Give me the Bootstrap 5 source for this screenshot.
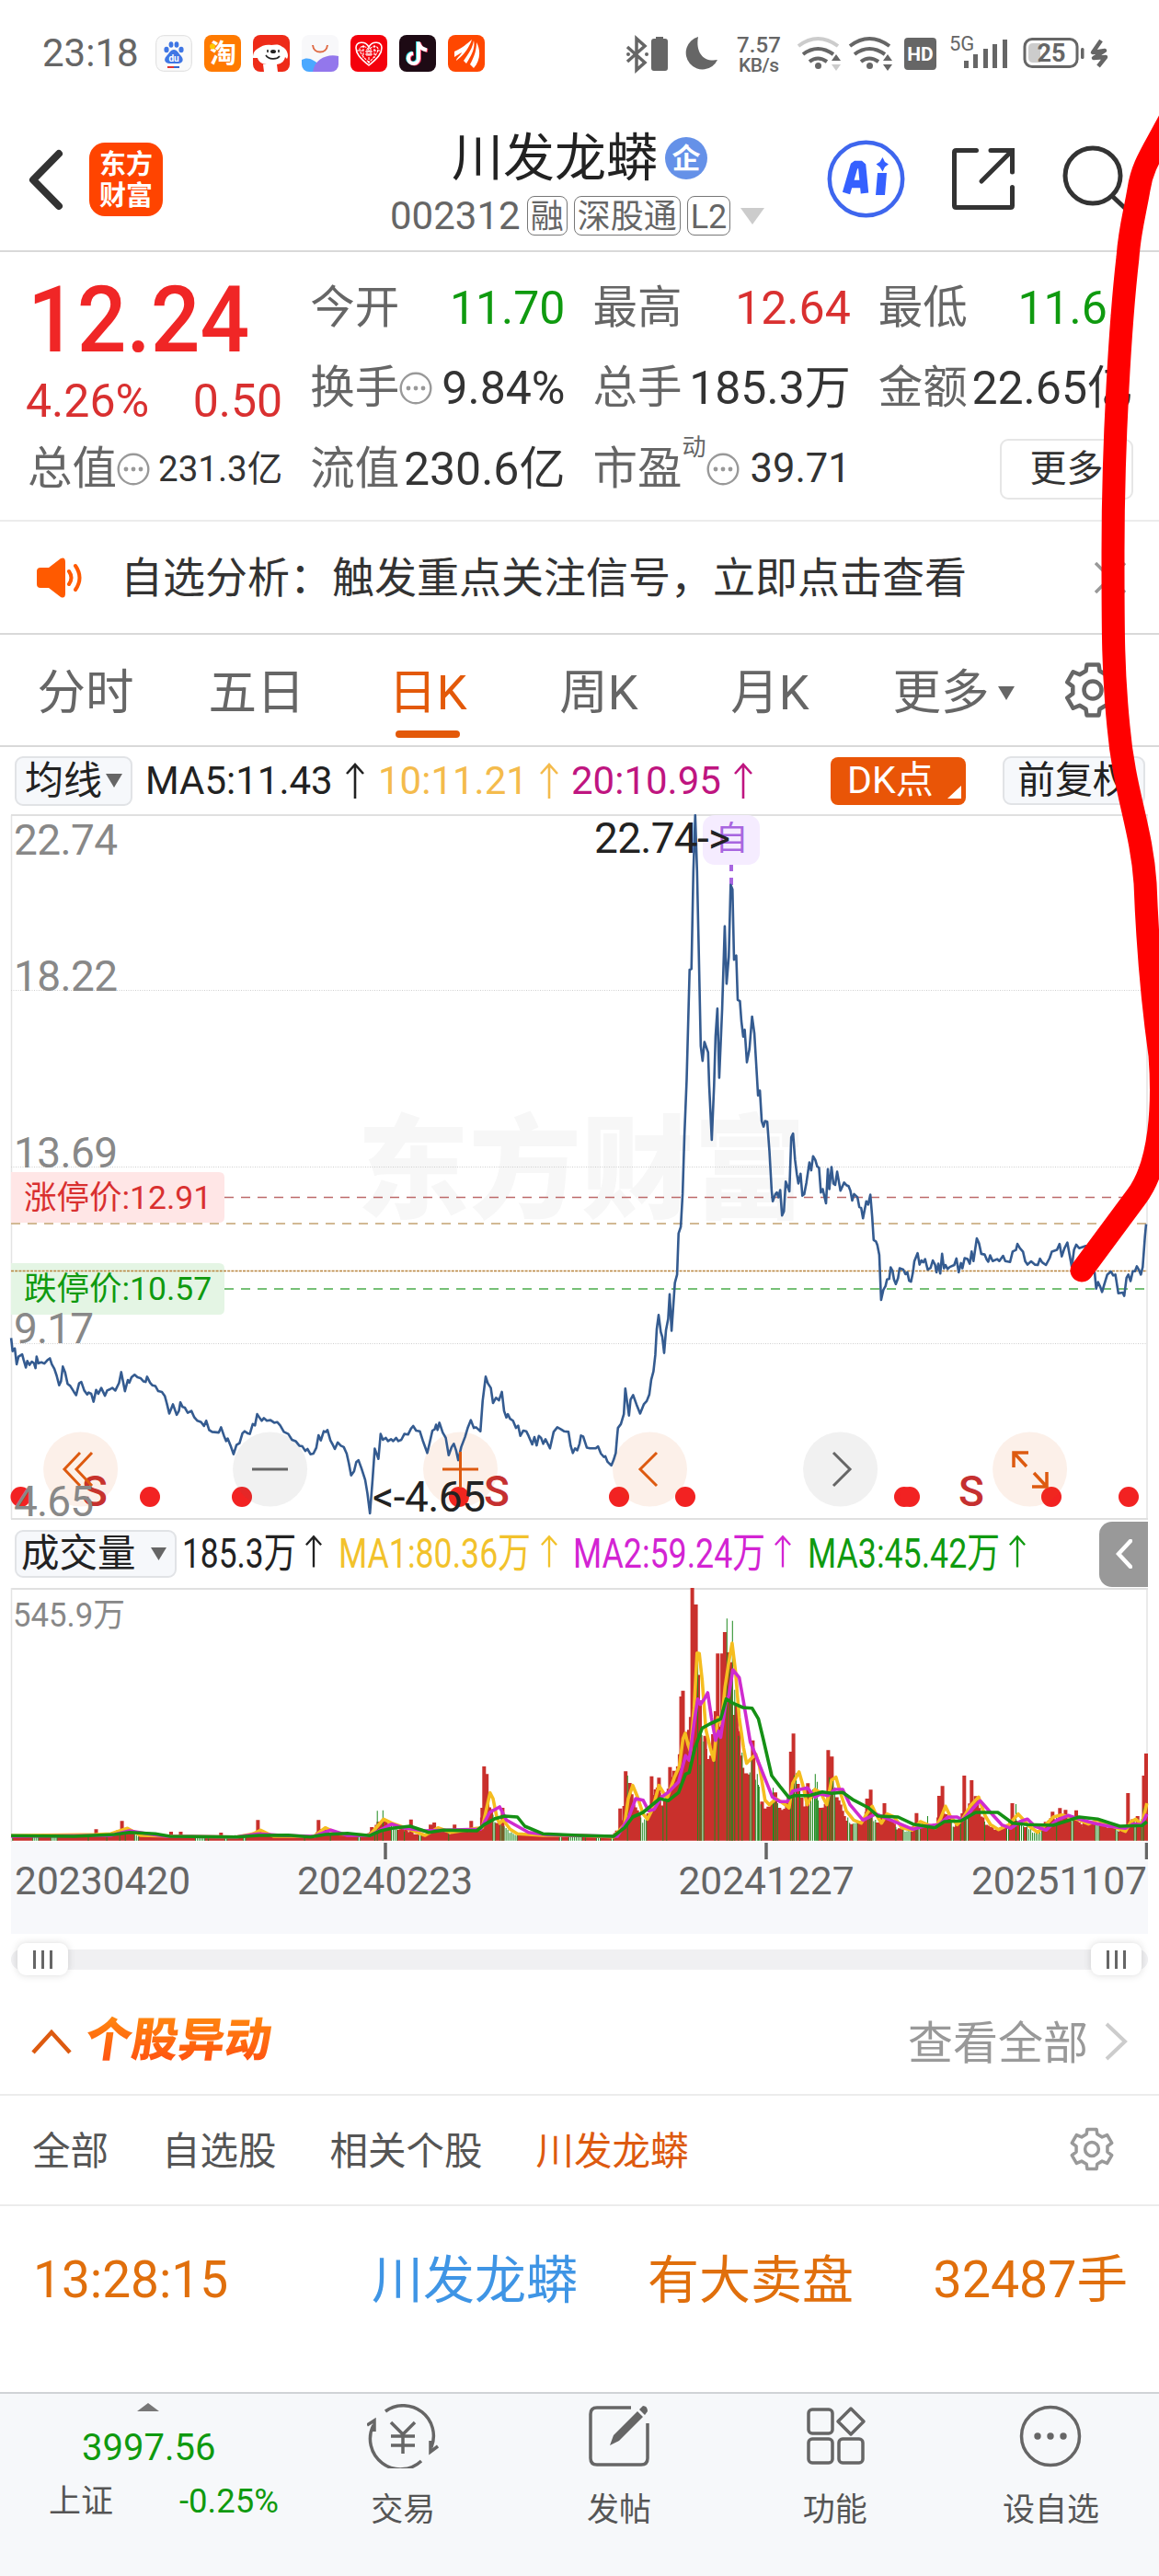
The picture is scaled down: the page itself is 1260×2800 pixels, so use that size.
<!DOCTYPE html>
<html lang="zh-CN">
<head>
  <meta charset="UTF-8">
  <title>川发龙蟒 002312</title>
  <meta name="viewport" content="width=device-width, initial-scale=1">
  <link href="https://cdn.jsdelivr.net/npm/bootstrap@5.3.3/dist/css/bootstrap.min.css" rel="stylesheet">
  <style>
    body { font-family: Roboto, "Noto Sans CJK SC", sans-serif; color: #333; line-height: 1; background: #fff; overflow-x: hidden; }
    svg { display: block; flex-shrink: 0; }
    svg text { font-family: Roboto, "Noto Sans CJK SC", sans-serif; }
    .page { width: 1260px; height: 2800px; overflow: hidden; }
    .gray6 { color: #666; }
    .gray9 { color: #999; }
    .up { color: #d93030; }
    .down { color: #0f9a0f; }
    .hot { color: #dd5a10; }

    /* status bar */
    .status-row { height: 116px; padding: 0 50px 0 46px; }
    .clock { font-size: 42px; width: 123px; }
    .app-ico { width: 40px; height: 40px; margin-right: 13px; border-radius: 8px; overflow: hidden; }

    /* title bar */
    .title-row { height: 158px; border-bottom: 2px solid #d9d9d9; }
    .brand { width: 80px; height: 80px; margin-top: 39px; border-radius: 17px; background: #ff4400; color: #fff; font-size: 29px; font-weight: 700; line-height: 34px; text-align: center; padding-top: 7px; }
    .stock { width: 410px; margin-left: 247px; padding-top: 28px; }
    .stock-name { font-size: 56px; color: #222; }
    .qi { width: 46px; height: 46px; border-radius: 50%; background: #6591e8; color: #fff; font-size: 31px; font-weight: 700; }
    .stock-code { font-size: 42px; color: #666; }
    .tagbox { height: 43px; border: 1.5px solid #777; border-radius: 8px; font-size: 36px; color: #666; padding: 2px 3px 0; }

    /* quote */
    .quote { height: 293px; padding: 17px 28px 0 30px; display: grid; grid-template-columns: repeat(4, 1fr); column-gap: 30px; border-bottom: 2px solid #ececec; }
    .qrow { height: 87.5px; display: flex; align-items: center; justify-content: space-between; font-size: 50px; white-space: nowrap; }
    .qrow .lb { font-size: 48.5px; color: #666; }
    .price { height: 114px; font-size: 100px; font-weight: 500; color: #f02626; transform: scaleX(.945); transform-origin: 0 50%; }
    .more-btn { width: 145px; height: 66px; border: 2px solid #e6e6e6; border-radius: 9px; font-size: 40px; }
    .notice { height: 123px; border-bottom: 2px solid #d9d9d9; font-size: 46px; padding: 0 36px 0 39px; }

    /* chart */
    .ktabs { height: 122px; border-bottom: 2px solid #d9d9d9; font-size: 52.5px; color: #666; }
    .ktabs .ktab { width: 186px; height: 100%; position: relative; padding-top: 6px; }
    .ktabs .on { color: #e35909; }
    .ktabs .on::after { content: ""; position: absolute; left: 58px; bottom: 8px; width: 70px; height: 8px; border-radius: 4px; background: #e35909; }
    .ma-row { height: 73px; font-size: 42px; padding-left: 16px; padding-right: 15px; }
    .sel { background: #f6f8fb; border: 2px solid #e1e3e6; border-radius: 9px; color: #222; }
    .dk { width: 147px; height: 52px; border-radius: 8px; background: #e95507; color: #fff; font-size: 41px; }
    .vol-row { height: 74px; padding-left: 16px; padding-right: 12px; }
    .fold { width: 53px; height: 71px; background: #999; border-radius: 14px 0 0 14px; }
    .dates { margin: 0 12px; height: 100px; background: #f7f8fb; }
    .range { height: 59px; padding: 0 12px 4px; }
    .track { height: 22px; border-radius: 11px; background: #f0f0f2; padding: 0 7px; }
    .knob { width: 55px; height: 35px; border-radius: 9px; background: #fff; box-shadow: 0 0 8px rgba(0,0,0,.15); gap: 6px; }
    .knob i { width: 3px; height: 20px; background: #666; }

    /* moves list */
    .mv-head { height: 117px; border-bottom: 2px solid #ececec; padding: 0 34px 0 34px; }
    .mv-title { font-size: 50.5px; font-weight: 900; color: transparent; background: linear-gradient(#ff8a10, #ff4a10); -webkit-background-clip: text; background-clip: text; transform: skewX(-8deg); padding: 4px 0; }
    .mv-tabs { height: 120px; border-bottom: 2px solid #ececec; padding: 3px 48px 0 35px; font-size: 41.5px; color: #555; gap: 58px; }
    .mv-row { height: 202px; padding: 53px 34px 0 36px; color: #e06f0c; font-size: 56px; }

    /* bottom bar */
    .tabbar { height: 200px; background: #f6f8fa; border-top: 2px solid #d0d3d6; font-size: 35px; color: #555; }
    .tabbar .idx { width: 321px; }
    .tabbar .tb { width: 234.7px; padding-top: 11px; }
    .tabbar .tb svg { margin-bottom: 28px; }
  </style>
</head>
<body>
<svg width="0" height="0" class="position-absolute">
  <symbol id="gear" viewBox="-32 -32 64 64">
    <path d="M-7.5-20.7-6.5-27.5H6.5L7.5-20.7 14.2-16.8 21.3-19.8 27.8-8.5 21.7-3.9V3.9L27.8 8.5 21.3 19.8 14.2 16.8 7.5 20.7 6.5 27.5H-6.5L-7.5 20.7-14.2 16.8-21.3 19.8-27.8 8.5-21.7 3.9V-3.9L-27.8-8.5-21.3-19.8-14.2-16.8Z" fill="none" stroke="currentColor" stroke-width="4.5" stroke-linejoin="round"/>
    <circle r="9.5" fill="none" stroke="currentColor" stroke-width="4.5"/>
  </symbol>
  <symbol id="info" viewBox="0 0 36 36">
    <circle cx="18" cy="18" r="16.3" fill="none" stroke="#999" stroke-width="2.4"/>
    <g fill="#999"><circle cx="10" cy="18" r="2.4"/><circle cx="18" cy="18" r="2.4"/><circle cx="26" cy="18" r="2.4"/></g>
  </symbol>
  <symbol id="arrow" viewBox="0 0 20 40">
    <path d="M10 39V2M1 12 10 2l9 10" fill="none" stroke="currentColor" stroke-width="2.6"/>
  </symbol>
</svg>

<div class="page position-relative">

  <!-- status bar -->
  <div class="status-row d-flex align-items-center">
    <div class="clock gray6">23:18</div>
    <svg class="app-ico" viewBox="0 0 40 40"><rect x=".7" y=".7" width="38.6" height="38.6" rx="8" fill="#fafafa" stroke="#ddd"/><g fill="#3f76e4"><ellipse cx="12" cy="16" rx="2.6" ry="3.3"/><ellipse cx="17" cy="10.5" rx="2.4" ry="3.2"/><ellipse cx="23" cy="10.5" rx="2.4" ry="3.2"/><ellipse cx="28" cy="16" rx="2.6" ry="3.3"/><path d="M20 16c4 0 5 4 8 7 4 5 0 8-3 8H15c-4 0-7-4-3-8 3-3 4-7 8-7z"/></g><text x="20" y="29" font-size="10" font-weight="700" fill="#fff" text-anchor="middle">du</text><path d="M13 35h7" stroke="#d33" stroke-width="2"/><path d="M20 35h6" stroke="#36c" stroke-width="2"/></svg>
    <svg class="app-ico" viewBox="0 0 40 40"><rect width="40" height="40" fill="#ff7a00"/><text x="20.500" y="30.500" font-size="29" font-weight="700" fill="#fff" text-anchor="middle">淘</text><circle cx="9" cy="12.500" r="3" fill="#ffc800"/></svg>
    <svg class="app-ico" viewBox="0 0 40 40"><rect width="40" height="40" fill="#ee2b18"/><path d="M5 15C2 17 0 19 0 25h5c1 4 5 7 10 7h-4l1 8h15l-1-8c6-1 8-4 9-8l2 2c3-4-1-12-5-13-5-4-9-2-12-2-5-1-10 0-15 4z" fill="#fff"/><path d="M16 16v3M28 16v3M14 22c3 5 12 5 15 1" stroke="#222" stroke-width="1.600" fill="none"/><ellipse cx="22" cy="18" rx="3" ry="2" fill="#222"/></svg>
    <svg class="app-ico" viewBox="0 0 40 40"><rect width="40" height="40" fill="#f8f8fa"/><path d="M0 27c7-4 13 0 20 6v7H0z" fill="#4aa8ff"/><path d="M12 40c2-14 16-20 28-17v17z" fill="#9377ec"/><path d="M12 11c1 10 15 10 16 0" fill="none" stroke="#df6b45" stroke-width="2"/></svg>
    <svg class="app-ico" viewBox="0 0 40 40"><rect width="40" height="40" fill="#f4000c"/><path d="M20 33C10 25 6 20 6 14c0-7 10-8 14-1 4-7 14-6 14 1 0 6-4 11-14 19z" fill="none" stroke="#fff" stroke-width="1.600"/><path d="M20 30C13 23 10 19 10 15c1-4 7-3 10 1 3-4 9-5 10-1 0 4-3 8-10 15zM20 12v20M14 11v14M26 11v14M7 17h8M25 17h8" fill="none" stroke="#fff" stroke-width="1.100" stroke-dasharray="3 1"/><path d="M18 15v8M22 15v8M16 18h8M16 21h8" stroke="#fff" stroke-width="1"/></svg>
    <svg class="app-ico" viewBox="0 0 40 40"><rect width="40" height="40" fill="#1d0a14"/><g fill="none" stroke-width="4"><path d="M21 7v18a5.500 5.500 0 1 1-6-5.500M21 8c1 5 4 7 9 8" stroke="#27d8dc" transform="translate(-1 0)"/><path d="M21 8v18a5.500 5.500 0 1 1-6-5.500M21 9c1 5 4 7 9 8" stroke="#f2335d" transform="translate(1 0)"/><path d="M21 7.500v18a5.500 5.500 0 1 1-6-5.500M21 8.500c1 5 4 7 9 8" stroke="#fff"/></g></svg>
    <svg class="app-ico" viewBox="0 0 40 40"><rect width="40" height="40" fill="#ff4700"/><path d="M7 18C16 14 20 10 26 5c-3 9-9 17-17 23 0-3 5-6 6-9-2 1-5 3-8 5zM17 28C22 21 27 14 28 6c2 9-3 17-8 25zM24 32C29 23 31 16 31 8c5 9 4 20-3 28z" fill="#fff"/></svg>

    <svg class="ms-auto" width="530" height="44" viewBox="680 36 530 44" fill="#666">
      <path d="m682 51 19 17-9 8V42l9 8-19 17" fill="none" stroke="#666" stroke-width="3.500"/><circle cx="683" cy="59" r="2"/><circle cx="703" cy="59" r="2"/>
      <path d="M708 45q0-3 3-3h2v-2h8v2h2q3 0 3 3v29q0 3-3 3h-12q-3 0-3-3z"/>
      <path d="M759 40a18 18 0 1 0 21 25c-16 3-24-9-21-25z"/>
      <text x="825" y="57" font-size="24" font-weight="500" text-anchor="middle" textLength="48">7.57</text>
      <text x="825" y="78" font-size="21" font-weight="500" text-anchor="middle" textLength="44">KB/s</text>
      <g fill="none" stroke="#666" stroke-width="4">
        <path d="M868 50q21-16 43 0" stroke="#ccc"/><path d="M873 59q16-12 33 0M880 67q9-7 19 0"/><circle cx="889.500" cy="71.500" r="3.500" fill="#666" stroke="none"/>
        <path d="m909 59 5 7h-10z" fill="#666" stroke="none"/><path d="m909 77 5-7h-10z" fill="#ccc" stroke="none"/>
      </g>
      <g fill="none" stroke="#666" stroke-width="4" transform="translate(56 0)">
        <path d="M868 50q21-16 43 0M873 59q16-12 33 0M880 67q9-7 19 0"/><circle cx="889.500" cy="71.500" r="3.500" fill="#666" stroke="none"/>
        <path d="m909 59 5 7h-10zm0 18 5-7h-10z" fill="#666" stroke="none"/>
      </g>
      <rect x="983" y="41" width="35" height="35" rx="4"/><text x="1000.500" y="66" font-size="21" font-weight="700" fill="#fff" text-anchor="middle">HD</text>
      <text x="1032" y="55" font-size="22">5G</text>
      <path d="M1048 66h5v8h-5zM1058 59h5v15h-5zM1069 53h5v21h-5zM1079 48h5v26h-5zM1090 43h5v31h-5z"/>
      <rect x="1114" y="42.500" width="57" height="30" rx="8" fill="none" stroke="#666" stroke-width="3"/><path d="M1118 52q0-5 5-5h8v21h-8q-5 0-5-5z" fill="#ccc"/>
      <text x="1143" y="67" font-size="27" font-weight="700" text-anchor="middle">25</text><rect x="1175" y="52" width="3.500" height="12" rx="1.500"/>
      <path d="m1197 44-9 13 13-2-12 8 13-1-8 10" fill="none" stroke="#666" stroke-width="4.500" stroke-linejoin="round"/>
    </svg>
  </div>

  <!-- title bar -->
  <div class="title-row d-flex">
    <svg class="ms-4" width="73" height="156" viewBox="24 116 73 156"><path d="M64 167 36 195.500 64 224" fill="none" stroke="#333" stroke-width="8" stroke-linecap="round" stroke-linejoin="round"/></svg>
    <div class="brand">东方<br>财富</div>
    <div class="stock">
      <div class="d-flex align-items-center" style="padding-left:67px">
        <span class="stock-name">川发龙蟒</span><span class="qi d-flex align-items-center justify-content-center ms-2">企</span>
      </div>
      <div class="d-flex align-items-center" style="margin-top:13px;gap:7px">
        <span class="stock-code">002312</span>
        <span class="tagbox d-flex align-items-center">融</span>
        <span class="tagbox d-flex align-items-center">深股通</span>
        <span class="tagbox d-flex align-items-center">L2</span>
        <svg class="ms-1" width="26" height="18"><path d="M0 0h26L13 18z" fill="#ccc"/></svg>
      </div>
    </div>
    <svg class="ms-auto" width="370" height="156" viewBox="890 116 370 156">
      <circle cx="941.500" cy="194.500" r="39.700" fill="none" stroke="#3e66ee" stroke-width="4.500"/>
      <path d="m920 210 9-31h8l3 31M923 200h16" fill="none" stroke="#3560ff" stroke-width="8.500" stroke-linejoin="bevel"/>
      <path d="m954 188h10l-2 24h-10zM959.500 171l2.500 5 4 2.500-4 3-2.500 5-3-5-4-3 4-2.500z" fill="#3560ff"/>
      <path d="M1061.500 163.500h-22q-2 0-2 2v58q0 2 2 2h59q2 0 2-2v-20M1077 163.500h23.500V187M1099 165l-32 32" fill="none" stroke="#333" stroke-width="5" stroke-linecap="round"/>
      <circle cx="1188" cy="191" r="30" fill="none" stroke="#333" stroke-width="5"/><path d="m1209 213 18 17" stroke="#333" stroke-width="5"/>
    </svg>
  </div>

  <!-- quote -->
  <div class="quote">
    <div>
      <div class="price d-flex align-items-center">12.24</div>
      <div class="qrow up" style="height:61px"><span style="margin-left:-2px">4.26%</span><span>0.50</span></div>
      <div class="qrow"><span class="d-flex align-items-center lb">总值<svg width="36" height="36"><use href="#info"/></svg></span><span style="font-size:38.500px">231.3亿</span></div>
    </div>
    <div>
      <div class="qrow"><span class="lb">今开</span><span class="down">11.70</span></div>
      <div class="qrow"><span class="d-flex align-items-center lb">换手<svg width="36" height="36"><use href="#info"/></svg></span><span>9.84%</span></div>
      <div class="qrow"><span class="lb">流值</span><span>230.6亿</span></div>
    </div>
    <div>
      <div class="qrow"><span class="lb">最高</span><span class="up">12.64</span></div>
      <div class="qrow"><span class="lb">总手</span><span>185.3万</span></div>
      <div class="qrow justify-content-start"><span class="lb">市盈</span><span class="gray6 align-self-start" style="font-size:26px;margin-top:7px">动</span><svg width="36" height="36"><use href="#info"/></svg><span style="font-size:43.500px;margin-left:12px">39.71</span></div>
    </div>
    <div>
      <div class="qrow"><span class="lb">最低</span><span class="down">11.65</span></div>
      <div class="qrow"><span class="lb">金额</span><span>22.65亿</span></div>
      <div class="qrow justify-content-end"><span class="more-btn d-flex align-items-center justify-content-center">更多</span></div>
    </div>
  </div>

  <div class="notice d-flex align-items-center">
    <svg width="52" height="44" viewBox="0 0 52 44"><path d="M1 15q0-4 4-4h9L27 1q5-2 5 4v34q0 6-5 4L14 33H5q-4 0-4-4z" fill="#ff5a00"/><path d="M36 15q5 7 0 14M43 9q9 13 0 26" fill="none" stroke="#ff5a00" stroke-width="4" stroke-linecap="round"/></svg>
    <span style="margin-left:40px">自选分析：触发重点关注信号，立即点击查看</span>
    <svg class="ms-auto" width="34" height="34"><path d="M1 1l32 32M33 1 1 33" stroke="#999" stroke-width="3.500"/></svg>
  </div>

  <!-- period tabs -->
  <div class="ktabs d-flex align-items-center">
    <div class="ktab d-flex align-items-center justify-content-center">分时</div>
    <div class="ktab d-flex align-items-center justify-content-center">五日</div>
    <div class="ktab on d-flex align-items-center justify-content-center">日K</div>
    <div class="ktab d-flex align-items-center justify-content-center">周K</div>
    <div class="ktab d-flex align-items-center justify-content-center">月K</div>
    <div class="ktab d-flex align-items-center justify-content-center" style="padding-left:27px">更多<svg width="18" height="15" style="margin-left:9px"><path d="M0 0h18L9 15z" fill="#666"/></svg></div>
    <svg width="64" height="64" style="margin-left:40px"><use href="#gear"/></svg>
  </div>

  <div class="ma-row d-flex align-items-center">
    <span class="sel d-flex align-items-center" style="width:128px;height:54px;padding-left:9px">均线<svg width="18" height="15" style="margin-left:4px"><path d="M0 0h18L9 15z" fill="#666"/></svg></span>
    <span style="color:#222;margin-left:14px;width:218px">MA5:11.43</span><svg style="color:#222" width="20" height="40"><use href="#arrow"/></svg>
    <span style="color:#f4bb4c;margin-left:15px;width:176px">10:11.21</span><svg style="color:#f4bb4c" width="20" height="40"><use href="#arrow"/></svg>
    <span style="color:#bf1580;margin-left:14px;width:177px">20:10.95</span><svg style="color:#bf1580" width="20" height="40"><use href="#arrow"/></svg>
    <span class="dk d-flex align-items-center ms-auto" style="padding-left:18px">DK点<svg width="15" height="14" style="margin:24px 0 0 15px"><path d="M15 0v14H0z" fill="#fff"/></svg></span>
    <span class="sel d-flex align-items-center justify-content-center" style="width:155px;height:53px;margin-left:40px;font-size:41px">前复权</span>
  </div>

  <!-- price chart -->
  <svg width="1260" height="767" viewBox="0 885 1260 767">
    <text x="388" y="1314" font-size="122" font-weight="900" fill="#f7f7f7">东方财富</text>
    <path d="M12.500 886V1651M1247 886V1651" stroke="#e4e4e4" stroke-width="1.500"/>
    <path d="M12 886H1248M12 1651H1248" stroke="#e0e0e0" stroke-width="2"/>
    <path d="M12 1076.500H1247M12 1262.500H1247M12 1460.500H1247" stroke="none"/>
    <path d="M12 1076.500H1247M12 1268.500H1247M12 1460.500H1247" stroke="#cfcfcf" stroke-width="1" stroke-dasharray="1 1.500"/>
    <path d="M12 1274H238q6 0 6 6v43q0 6-6 6H12z" fill="#ffe6e6"/>
    <path d="M12 1373H238q6 0 6 6v44q0 6-6 6H12z" fill="#e4f5e4"/>
    <path d="M244 1301.500H1247" stroke="#bd6a6a" stroke-width="1.600" stroke-dasharray="10 8"/>
    <path d="M12 1330H1247" stroke="#d2b994" stroke-width="1.800" stroke-dasharray="10 8"/>
    <path d="M12 1381.500H1247" stroke="#b8843e" stroke-width="1.500" stroke-dasharray="3 1.200"/>
    <path d="M244 1401H1247" stroke="#76c076" stroke-width="2" stroke-dasharray="10 8"/>
    <text x="26" y="1314" font-size="35.500" fill="#d93030">涨停价:12.91</text>
    <text x="26" y="1413" font-size="35.500" fill="#0f9a0f">跌停价:10.57</text>
    <rect x="764" y="886" width="62" height="54" rx="13" fill="#f5ecff"/>
    <text x="795.500" y="924" font-size="36" fill="#a866e0" text-anchor="middle">自</text>
    <path d="M795 940v7M795 954v8" stroke="#a866e0" stroke-width="4"/>
    <g id="dots" fill="#f22222"></g>
    <g font-size="46" font-weight="500" fill="#c53030" text-anchor="middle"><text x="103" y="1637">S</text><text x="540" y="1637">S</text><text x="1056" y="1637">S</text></g>
    <g fill="#e35909" fill-opacity=".09"><circle cx="87.600" cy="1597" r="40.500"/><circle cx="500.500" cy="1597" r="40.500"/><circle cx="706.500" cy="1597" r="40.500"/><circle cx="1119.600" cy="1597" r="40.500"/></g>
    <g fill="#666" fill-opacity=".09"><circle cx="293.600" cy="1597" r="40.500"/><circle cx="913.600" cy="1597" r="40.500"/></g>
    <polyline id="priceLine" fill="none" stroke="#345b90" stroke-width="2.600" stroke-linejoin="round"/>
    <g fill="none" stroke="#dd5a10" stroke-width="3">
      <path d="m87 1579-17 18 17 18m13-36-17 18 17 18M481 1597h39M500.500 1578v39M714 1579l-18 18 18 18"/>
      <path d="M1102 1595v-16h16m-15 1 13 14M1138 1600v16h-16m15-1-13-14" stroke-width="3.500"/>
    </g>
    <path d="M274 1597h39M906 1579l18 18-18 18" fill="none" stroke="#666" stroke-width="3"/>
    <g font-size="46" fill="#888"><text x="15" y="929" textLength="113">22.74</text><text x="15" y="1077" textLength="113">18.22</text><text x="15" y="1269" textLength="113">13.69</text><text x="15" y="1460" textLength="87">9.17</text><text x="15" y="1648" textLength="87">4.65</text></g>
    <g font-size="46" fill="#222"><text x="646" y="927" textLength="148">22.74-&gt;</text><text x="405" y="1643" textLength="123">&lt;-4.65</text></g>
  </svg>

  <!-- volume -->
  <div class="vol-row d-flex align-items-center">
    <span class="sel d-flex align-items-center" style="width:176px;height:52px;padding-left:5px;font-size:41.500px">成交量<svg width="17" height="14" style="margin-left:16px"><path d="M0 0h17L8.500 14z" fill="#666"/></svg></span>
    <svg width="1003" height="74" viewBox="192 1652 1003 74" font-size="45">
      <text x="198" y="1704" fill="#222" textLength="124" lengthAdjust="spacingAndGlyphs">185.3万</text>
      <text x="368" y="1704" fill="#f2c22b" textLength="209" lengthAdjust="spacingAndGlyphs">MA1:80.36万</text>
      <text x="623" y="1704" fill="#d324d3" textLength="209" lengthAdjust="spacingAndGlyphs">MA2:59.24万</text>
      <text x="878" y="1704" fill="#0f9a0f" textLength="209" lengthAdjust="spacingAndGlyphs">MA3:45.42万</text>
      <use href="#arrow" x="332" y="1666" width="18" height="41" color="#222"/>
      <use href="#arrow" x="588" y="1666" width="18" height="41" color="#f2c22b"/>
      <use href="#arrow" x="842" y="1666" width="18" height="41" color="#d324d3"/>
      <use href="#arrow" x="1097" y="1666" width="18" height="41" color="#0f9a0f"/>
    </svg>
    <span class="fold d-flex align-items-center justify-content-center"><svg width="18" height="32"><path d="M16 2 3 16l13 14" fill="none" stroke="#fff" stroke-width="4.500" stroke-linecap="round"/></svg></span>
  </div>
  <svg width="1260" height="276" viewBox="0 1726 1260 276">
    <path d="M12 1727H1248" stroke="#e0e0e0" stroke-width="2"/><path d="M12.500 1726V2002M1247 1726V2002" stroke="#e4e4e4" stroke-width="1.500"/>
    <text x="14" y="1768" font-size="36.500" fill="#888" textLength="122" lengthAdjust="spacingAndGlyphs">545.9万</text>
    <path id="redBars" fill="#c9302c"/><path id="greenBars" fill="#1f8a1f"/>
    <polyline id="ma1" fill="none" stroke="#f5bd1f" stroke-width="3.600" stroke-linejoin="round"/>
    <polyline id="ma2" fill="none" stroke="#cf2bcf" stroke-width="3.600" stroke-linejoin="round"/>
    <polyline id="ma3" fill="none" stroke="#159015" stroke-width="3.600" stroke-linejoin="round"/>
  </svg>
  <div class="dates">
    <svg width="1236" height="100" viewBox="12 2002 1236 100" font-size="42.500" fill="#666">
      <path d="M419 2003v18M833 2003v18M1246.500 2003v18" stroke="#666" stroke-width="3.500"/>
      <text x="16" y="2059">20230420</text><text x="418.500" y="2059" text-anchor="middle">20240223</text><text x="833" y="2059" text-anchor="middle">20241227</text><text x="1247" y="2059" text-anchor="end">20251107</text>
    </svg>
  </div>
  <div class="range d-flex flex-column justify-content-center">
    <div class="track d-flex align-items-center justify-content-between">
      <span class="knob d-flex align-items-center justify-content-center"><i></i><i></i><i></i></span>
      <span class="knob d-flex align-items-center justify-content-center"><i></i><i></i><i></i></span>
    </div>
  </div>

  <!-- moves -->
  <div class="mv-head d-flex align-items-center">
    <svg width="44" height="28"><path d="M2 26 22 4l20 22" fill="none" stroke="#dd5a10" stroke-width="4.500"/></svg>
    <span class="mv-title" style="margin-left:15px">个股异动</span>
    <span class="gray9 ms-auto" style="font-size:49px;padding-top:5px">查看全部</span>
    <svg width="25" height="42" style="margin-left:18px"><path d="m2 2 20 19L2 40" fill="none" stroke="#ccc" stroke-width="4"/></svg>
  </div>
  <div class="mv-tabs d-flex align-items-center">
    <span>全部</span><span>自选股</span><span>相关个股</span><span class="hot">川发龙蟒</span>
    <svg class="ms-auto gray9" width="50" height="54" style="margin-bottom:5px"><use href="#gear"/></svg>
  </div>
  <div class="mv-row d-flex">
    <span style="width:368px;font-size:55px">13:28:15</span><span style="width:300px;color:#3f95e5">川发龙蟒</span><span>有大卖盘</span><span class="ms-auto" style="font-size:55.500px">32487手</span>
  </div>

  <!-- bottom bar -->
  <div class="tabbar d-flex">
    <div class="idx">
      <svg width="24" height="9" style="margin:10px 0 0 149px"><path d="M0 9h24L12 0z" fill="#777"/></svg>
      <div class="down" style="font-size:40px;margin:20px 0 0 89px">3997.56</div>
      <div class="d-flex align-items-center" style="padding:20px 18px 0 53px"><span>上证</span><span class="down ms-auto" style="font-size:36.500px">-0.25%</span></div>
    </div>
    <div class="tb d-flex flex-column align-items-center">
      <svg width="78" height="70" viewBox="-39 -35 78 70" fill="none" stroke="#666" stroke-width="3.500"><path d="M-19-27A33 33 0 0 1 31 12M20 27A33 33 0 0 1-32-12M-39-12l8-5 0 12M38 11l-8 6V5M-13-15 0-2 13-15M0-2v21M-13 0h26M-13 10h26"/></svg>交易
    </div>
    <div class="tb d-flex flex-column align-items-center">
      <svg width="70" height="70" viewBox="-35 -35 70 70" fill="none" stroke="#666" stroke-width="3.500"><path d="M13-31h-37q-7 0-7 7v48q0 7 7 7h48q7 0 7-7v-38"/><path d="m-10 10 4-11L20-27l6 6L0 5zM22-29l4-4q5 0 5 6l-3 4z" fill="#666" stroke="none"/></svg>发帖
    </div>
    <div class="tb d-flex flex-column align-items-center">
      <svg width="70" height="70" viewBox="-35 -35 70 70" fill="none" stroke="#666" stroke-width="3.500"><rect x="-29" y="-29" width="26" height="26" rx="4"/><rect x="-29" y="3" width="26" height="26" rx="4"/><rect x="4" y="3" width="26" height="26" rx="4"/><path d="m17-30 14 14-14 14L3-16z" stroke-linejoin="round"/></svg>功能
    </div>
    <div class="tb d-flex flex-column align-items-center">
      <svg width="70" height="70" viewBox="-35 -35 70 70"><circle r="31.500" fill="none" stroke="#666" stroke-width="3.500"/><g fill="#666"><circle cx="-14" r="3.700"/><circle r="3.700"/><circle cx="14" r="3.700"/></g></svg>设自选
    </div>
  </div>

  <!-- hand-drawn marker stroke -->
  <svg class="position-absolute top-0 start-0" width="1260" height="1420" viewBox="0 0 1260 1420">
    <path d="M1277 120C1254 165 1242 178 1238 206C1234 230 1228 250 1226 280C1218 350 1210 480 1210 600C1210 690 1210 730 1216 790C1222 860 1241 900 1245 960C1248 1040 1253 1090 1261 1147C1265 1200 1262 1265 1236 1300L1176 1381" fill="none" stroke="#ff0000" stroke-width="25" stroke-linecap="round" stroke-linejoin="round"/>
  </svg>
</div>

<script src="https://cdn.jsdelivr.net/npm/bootstrap@5.3.3/dist/js/bootstrap.bundle.min.js"></script>
<script>
  // series are stored as "x,y" pairs on a finer grid, scaled down to pixels here
  const KX = 0.40179;
  const parse = (s) => s.trim().split(/\s+/).map((p) => p.split(",").map(Number));
  const scale = (pts, ky, top) => pts.map(([x, y]) => [(x * KX).toFixed(1), (top + y * ky).toFixed(1)]);

  const price = parse(`30,768 34,808 40,800 45,848 50,825 60,818 64,835 70,858 74,838 80,850 86,840 92,845 96,860 99,825 104,845 112,842 120,846 128,836 135,830 140,848 147,862 153,882 160,912 165,900 170,855 176,872 183,908 190,914 200,932 206,942 214,906 220,902 228,928 236,940 240,934 247,938 253,962 260,926 266,938 274,920 284,944 290,928 298,924 304,920 312,928 322,905 328,872 338,930 346,896 350,904 356,888 364,880 372,888 380,890 388,900 394,902 398,886 406,904 412,912 420,914 428,930 438,932 446,945 452,970 458,998 468,970 478,1002 484,990 488,964 494,978 500,980 508,996 518,990 526,1010 534,1020 544,1024 552,1036 558,1020 566,1048 574,1054 592,1056 598,1040 606,1066 612,1082 616,1074 624,1096 632,1122 640,1094 648,1088 656,1058 662,1052 670,1058 676,1060 684,1030 690,1034 696,1000 704,1014 708,1020 714,1012 722,1020 732,1018 742,1026 750,1024 758,1034 768,1054 780,1060 790,1078 800,1082 810,1096 818,1098 826,1112 832,1106 840,1122 848,1120 856,1102 862,1064 868,1080 876,1052 882,1054 886,1048 894,1080 900,1092 906,1106 914,1086 922,1096 930,1100 938,1120 944,1150 950,1186 958,1174 964,1146 970,1140 978,1165 988,1200 994,1240 1001,1302 1008,1200 1014,1105 1024,1136 1030,1060 1036,1078 1044,1072 1050,1082 1058,1076 1064,1082 1072,1072 1078,1082 1086,1078 1094,1060 1104,1062 1112,1044 1118,1036 1126,1050 1136,1052 1144,1080 1156,1118 1162,1090 1170,1050 1176,1046 1180,1032 1184,1048 1189,1026 1198,1056 1206,1072 1214,1125 1222,1100 1228,1090 1234,1110 1240,1140 1248,1100 1258,1070 1266,1040 1274,1018 1282,1042 1288,1040 1300,1052 1306,960 1314,886 1320,906 1328,920 1334,966 1342,950 1350,958 1358,932 1364,990 1370,1010 1374,1000 1380,1014 1388,1020 1396,1042 1402,1035 1408,1066 1416,1050 1424,1052 1430,1066 1440,1092 1446,1070 1452,1095 1458,1066 1464,1072 1470,1090 1476,1076 1488,1104 1498,1054 1508,1040 1518,1046 1526,1052 1538,1054 1544,1096 1550,1118 1556,1104 1562,1110 1568,1090
    1572,1065 1578,1068 1588,1102 1596,1104 1612,1104 1618,1098 1626,1120 1634,1130 1638,1128 1644,1145 1654,1156 1660,1140 1666,1118 1670,1065 1672,1042 1680,1030 1688,1000 1692,922 1702,1004 1706,956 1713,942 1722,970 1732,998 1742,970 1750,960 1757,940 1762,895 1768,870 1773,820 1777,740 1782,698 1788,750 1792,765 1797,814 1802,745 1808,710 1812,635 1817,746 1826,600 1832,575 1836,450 1842,430 1847,330 1852,150 1858,-18 1866,-353 1871,-355 1876,-653 1881,-823 1886,-653 1891,-392 1896,-121 1901,-75 1906,-133 1916,-101 1919,0 1926,165 1932,0 1936,-150 1941,-234 1946,-24 1954,-234 1961,-485 1966,-310 1972,-392 1977,-611 1982,-597 1986,-383 1992,-396 1996,-261 2002,-257 2006,-196 2011,-149 2015,-170 2021,-71 2028,-112 2035,-210 2041,-159 2048,-28 2051,30 2056,15 2061,108 2066,125 2070,108 2076,110 2082,200 2088,320 2091,352 2098,330 2102,325 2106,340 2111,318 2116,395 2121,383 2126,292 2136,322 2141,158 2146,146 2151,225 2156,270 2160,298 2166,268 2171,335 2176,330 2182,295 2190,234 2195,258 2200,215 2206,226 2211,246 2216,250 2221,325 2226,315 2235,358 2240,254 2244,315 2250,248 2255,298 2260,302 2265,262 2274,320 2284,295 2290,303 2296,306 2301,320 2306,350 2311,330 2320,340 2325,370 2330,372 2335,404 2344,352 2349,362 2355,332 2360,400 2364,470 2370,474 2374,485 2379,515 2384,652 2390,622 2396,610 2400,590 2406,588 2410,553 2415,564 2419,590 2424,604 2430,586 2434,556 2444,560 2450,574 2455,568 2460,594 2465,597 2470,570 2474,535 2483,510 2488,545 2493,532 2498,538 2503,528 2510,560 2518,555 2524,532 2530,545 2534,568 2539,542 2544,572 2549,512 2554,556 2558,546 2564,558 2570,552 2582,546 2588,526 2594,568 2600,540 2604,556 2610,525 2618,528 2624,542 2629,505 2634,534 2643,465 2649,480 2655,512 2664,514 2670,530 2674,536 2679,517 2686,534 2698,528 2704,534 2714,518 2720,534 2733,537 2740,505 2749,500 2753,482 2760,495 2768,506 2774,535 2780,545 2790,535 2800,545 2808,546 2814,527 2820,538 2830,546 2840,525 2846,505 2860,500 2867,482 2873,520 2880,495 2888,478 2894,515 2900,552 2906,500 2912,484 2920,495 2938,488 2953,540 2962,570 2966,618 2971,598 2977,612 2982,628 2988,605 2996,575 3006,566 3012,578 3018,575 3026,632 3038,630 3042,640 3048,585 3053,575 3059,595 3065,565 3071,565 3076,550 3082,562 3087,575 3092,552 3098,460 3101,422`);
  document.getElementById("priceLine").setAttribute("points", scale(price, 1 / 2.8, 1180).join(" "));

  const ma1 = parse(`30,886 260,882 300,880 345,862 380,885 480,888 640,890 685,880 705,868 740,888 850,888 880,860 915,880 1000,885 1038,832 1060,845 1100,862 1150,885 1185,860 1220,875 1290,862 1305,860 1326,746 1334,765 1345,830 1352,845 1362,835 1380,865 1400,880 1470,885 1560,885 1660,890 1690,850 1700,765 1712,722 1725,760 1740,815 1752,832 1765,800 1783,722 1805,765 1825,695 1838,660 1848,570 1854,552 1862,590 1868,610 1878,470 1886,290 1892,292 1900,380 1910,540 1922,600 1931,640 1942,500 1952,520 1962,400 1972,320 1981,258 1990,350 2000,500 2012,600 2020,650 2032,635 2045,620 2055,660 2070,770 2082,785 2100,765 2125,785 2135,795 2145,715 2162,678 2172,720 2184,785 2205,735 2220,745 2237,785 2250,705 2262,695 2275,750 2290,805 2310,835 2330,845 2345,815 2360,790 2370,815 2385,845 2400,815 2420,825 2440,860 2468,868 2490,840 2530,860 2545,830 2558,790 2570,820 2590,850 2605,830 2625,790 2648,760 2665,820 2680,850 2702,866 2730,850 2755,815 2785,855 2808,875 2830,850 2850,825 2872,818 2895,825 2920,835 2945,848 2970,835 3000,850 3045,872 3060,840 3073,832 3090,850 3103,780`);
  const ma2 = parse(`30,888 300,885 350,870 400,880 450,888 640,890 700,880 760,885 850,888 895,868 940,885 1000,886 1060,848 1090,860 1150,870 1210,868 1300,865 1325,810 1352,792 1370,835 1400,855 1430,875 1480,883 1568,886 1670,888 1700,830 1720,765 1740,770 1755,805 1770,800 1790,760 1808,745 1836,710 1855,625 1865,640 1880,500 1888,440 1895,458 1906,440 1915,420 1925,500 1936,575 1944,545 1950,565 1964,450 1972,430 1983,345 2000,370 2012,450 2030,580 2050,640 2070,700 2090,760 2110,775 2130,775 2145,740 2165,735 2185,730 2205,760 2220,750 2240,755 2260,735 2280,735 2300,785 2335,835 2370,815 2400,830 2430,845 2470,865 2500,855 2540,850 2565,825 2590,825 2605,835 2630,800 2652,772 2680,810 2710,850 2735,862 2760,840 2780,832 2800,855 2830,868 2860,835 2890,820 2920,832 2960,845 3000,855 3045,862 3065,848 3090,850 3103,815`);
  const ma3 = parse(`30,886 200,888 310,882 350,875 420,880 460,888 640,890 700,885 780,884 840,890 880,882 940,878 1000,886 1030,870 1060,862 1110,855 1160,875 1200,868 1290,870 1310,850 1340,830 1365,822 1400,825 1420,855 1470,880 1568,885 1660,888 1690,860 1712,825 1740,810 1770,780 1785,765 1808,772 1836,745 1855,685 1865,680 1880,600 1900,535 1920,522 1950,505 1965,440 1985,455 2010,468 2035,470 2052,505 2065,570 2088,690 2110,725 2135,762 2150,755 2190,755 2225,743 2250,748 2280,745 2310,770 2350,795 2375,822 2430,825 2470,848 2530,860 2555,840 2600,838 2640,810 2700,810 2740,845 2780,850 2850,852 2920,825 2970,832 3030,855 3090,853 3103,840`);
  [["ma1", ma1], ["ma2", ma2], ["ma3", ma3]].forEach(([id, pts]) => {
    document.getElementById(id).setAttribute("points", scale(pts, 1 / 3, 1700).join(" "));
  });

  // volume bars: peaks are fixed, ordinary days follow the short average
  const redPeaks = parse(`260,865 330,838 463,873 489,873 598,876 698,835 862,835 1006,858 1112,833 1165,850 1175,843 1230,850 1275,838 1305,795 1310,660 1317,685 1360,795 1678,797 1693,676 1763,692 1783,697 1813,662 1843,432 1848,413 1855,548 1873,77 1883,132 1908,560 1936,480 1942,292 1954,292 1961,222 1978,320 1993,460 2037,575 2062,775 2098,745 2140,612 2147,553 2186,715 2241,607 2251,628 2346,765 2356,736 2393,780 2480,812 2541,756 2550,724 2609,690 2629,705 2640,757 2739,780 2848,808 2868,796 2883,802 2912,803 3052,747 3078,822 3095,690 3101,618`);
  const greenPeaks = parse(`1021,805 1036,803 1698,690 1888,290 1894,655 1967,178 1982,185 1988,410 1998,560 2008,615 2052,720 2092,730 2206,685 2211,710 2510,822 2749,783`);
  let seed = 7;
  const rnd = () => (seed = (seed * 16807) % 2147483647) / 2147483647;
  const at = (pts, x) => {
    let i = 1;
    while (i < pts.length - 1 && pts[i][0] < x) i++;
    const [a, b] = [pts[i - 1], pts[i]];
    return a[1] + (b[1] - a[1]) * (x - a[0]) / (b[0] - a[0]);
  };
  const bottom = 2000.7;
  const bar = (x, y, w) => {
    const top = 1700 + y / 3;
    return `M${(x * KX - w / 2).toFixed(1)} ${top.toFixed(1)}h${w}V${bottom}h-${w}z`;
  };
  let red = "", green = "", falling = false;
  for (let x = 34; x < 3100; x += 5) {
    if (rnd() < (falling ? 0.4 : 0.13)) falling = !falling;
    const h = (902 - at(ma1, x + 8)) * (0.75 + rnd() * 0.3);
    if (falling) green += bar(x, 902 - h, 1);
    else red += bar(x, 902 - h, 4);
  }
  redPeaks.forEach(([x, y]) => red += bar(x, y, 4));
  greenPeaks.forEach(([x, y]) => green += bar(x, y, 1));
  document.getElementById("redBars").setAttribute("d", red);
  document.getElementById("greenBars").setAttribute("d", green);

  // event dots along the bottom of the price chart
  document.getElementById("dots").innerHTML = [22.5, 163, 263, 499, 673, 745, 983, 989, 1143, 1227]
    .map((x) => `<circle cx="${x}" cy="1627" r="11"/>`).join("");
</script>
</body>
</html>
